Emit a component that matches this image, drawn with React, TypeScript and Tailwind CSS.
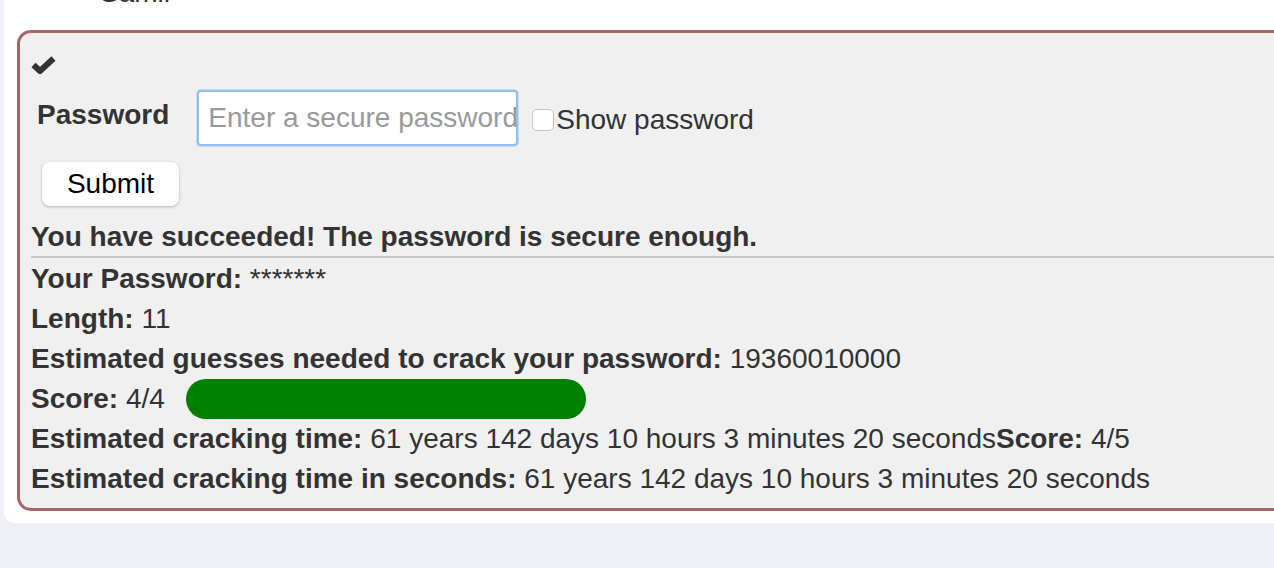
import React from 'react';

const rows: { label: string; value: React.ReactNode }[] = [
  { label: 'Your Password:', value: ' *******' },
  { label: 'Length:', value: ' 11' },
  { label: 'Estimated guesses needed to crack your password:', value: ' 19360010000' },
];

export default function App() {
  return (
    <div
      className="w-full h-[568px] overflow-hidden bg-[#f0f1f6] text-[#333] text-[28px] leading-[40px]"
      style={{ fontFamily: '"Liberation Sans", Arial, sans-serif' }}
    >
      {/* white panel */}
      <div className="ml-[4px] w-[1440px] bg-white rounded-b-[10px] pl-[13px] pb-[12px] flow-root">
        <div className="h-[30px] flow-root">
          <div className="-mt-[27px] ml-[83px]">Samir</div>
        </div>

        {/* result box */}
        <div className="w-[1420px] border-[3px] border-[#a96565] rounded-[14px] bg-[#f0f0f0] pl-[11px] pb-[9px]">
          <div className="pt-[23px]">
            <svg width="25" height="18" viewBox="0 0 25 18" className="block">
              <polyline points="2.5,9 9,15 22.5,2.5" fill="none" stroke="#333" strokeWidth="6" strokeLinejoin="miter" />
            </svg>
          </div>

          {/* password row */}
          <div className="mt-[16px] flex items-center h-[56px]">
            <label className="ml-[6px] font-bold mb-[7px]">Password</label>
            <input
              type="password"
              placeholder="Enter a secure password"
              className="ml-[28px] w-[321px] h-[56px] bg-white border-2 border-[#8fc1f3] shadow-[0_0_0_1px_rgba(143,193,243,0.45)] rounded-[4px] pl-[9px] text-[28px] text-[#333] placeholder:text-[#9a9a9a] outline-none"
              style={{ fontFamily: '"Liberation Sans", Arial, sans-serif' }}
            />
            <span className="ml-[14px] mt-[4px] w-[22px] h-[22px] bg-white border border-[#c4c4c4] rounded-[5px]" />
            <span className="ml-[2px] mt-[4px]">Show password</span>
          </div>

          <button className="mt-[16px] ml-[11px] w-[137px] h-[44px] bg-white rounded-[8px] shadow-[0_1px_3px_rgba(0,0,0,0.25)] text-black text-[28px] leading-[44px]">
            Submit
          </button>

          <div className="mt-[11px] h-[39px] font-bold">You have succeeded! The password is secure enough.</div>
          <div className="border-t-2 border-[#c8c8c8]" />

          <div className="mt-[1px]">
            {rows.map(r => (
              <div key={r.label} className="h-[40px] whitespace-nowrap">
                <b>{r.label}</b>
                {r.value}
              </div>
            ))}
            <div className="h-[40px] flex items-center whitespace-nowrap">
              <span>
                <b>Score:</b> 4/4
              </span>
              <div className="ml-[21px] w-[400px] h-[40px] rounded-full bg-[#008000]" />
            </div>
            <div className="h-[40px] whitespace-nowrap">
              <b>Estimated cracking time:</b> 61 years 142 days 10 hours 3 minutes 20 seconds<b>Score:</b> 4/5
            </div>
            <div className="h-[40px] whitespace-nowrap">
              <b>Estimated cracking time in seconds:</b> 61 years 142 days 10 hours 3 minutes 20 seconds
            </div>
          </div>
        </div>
      </div>
    </div>
  );
}
